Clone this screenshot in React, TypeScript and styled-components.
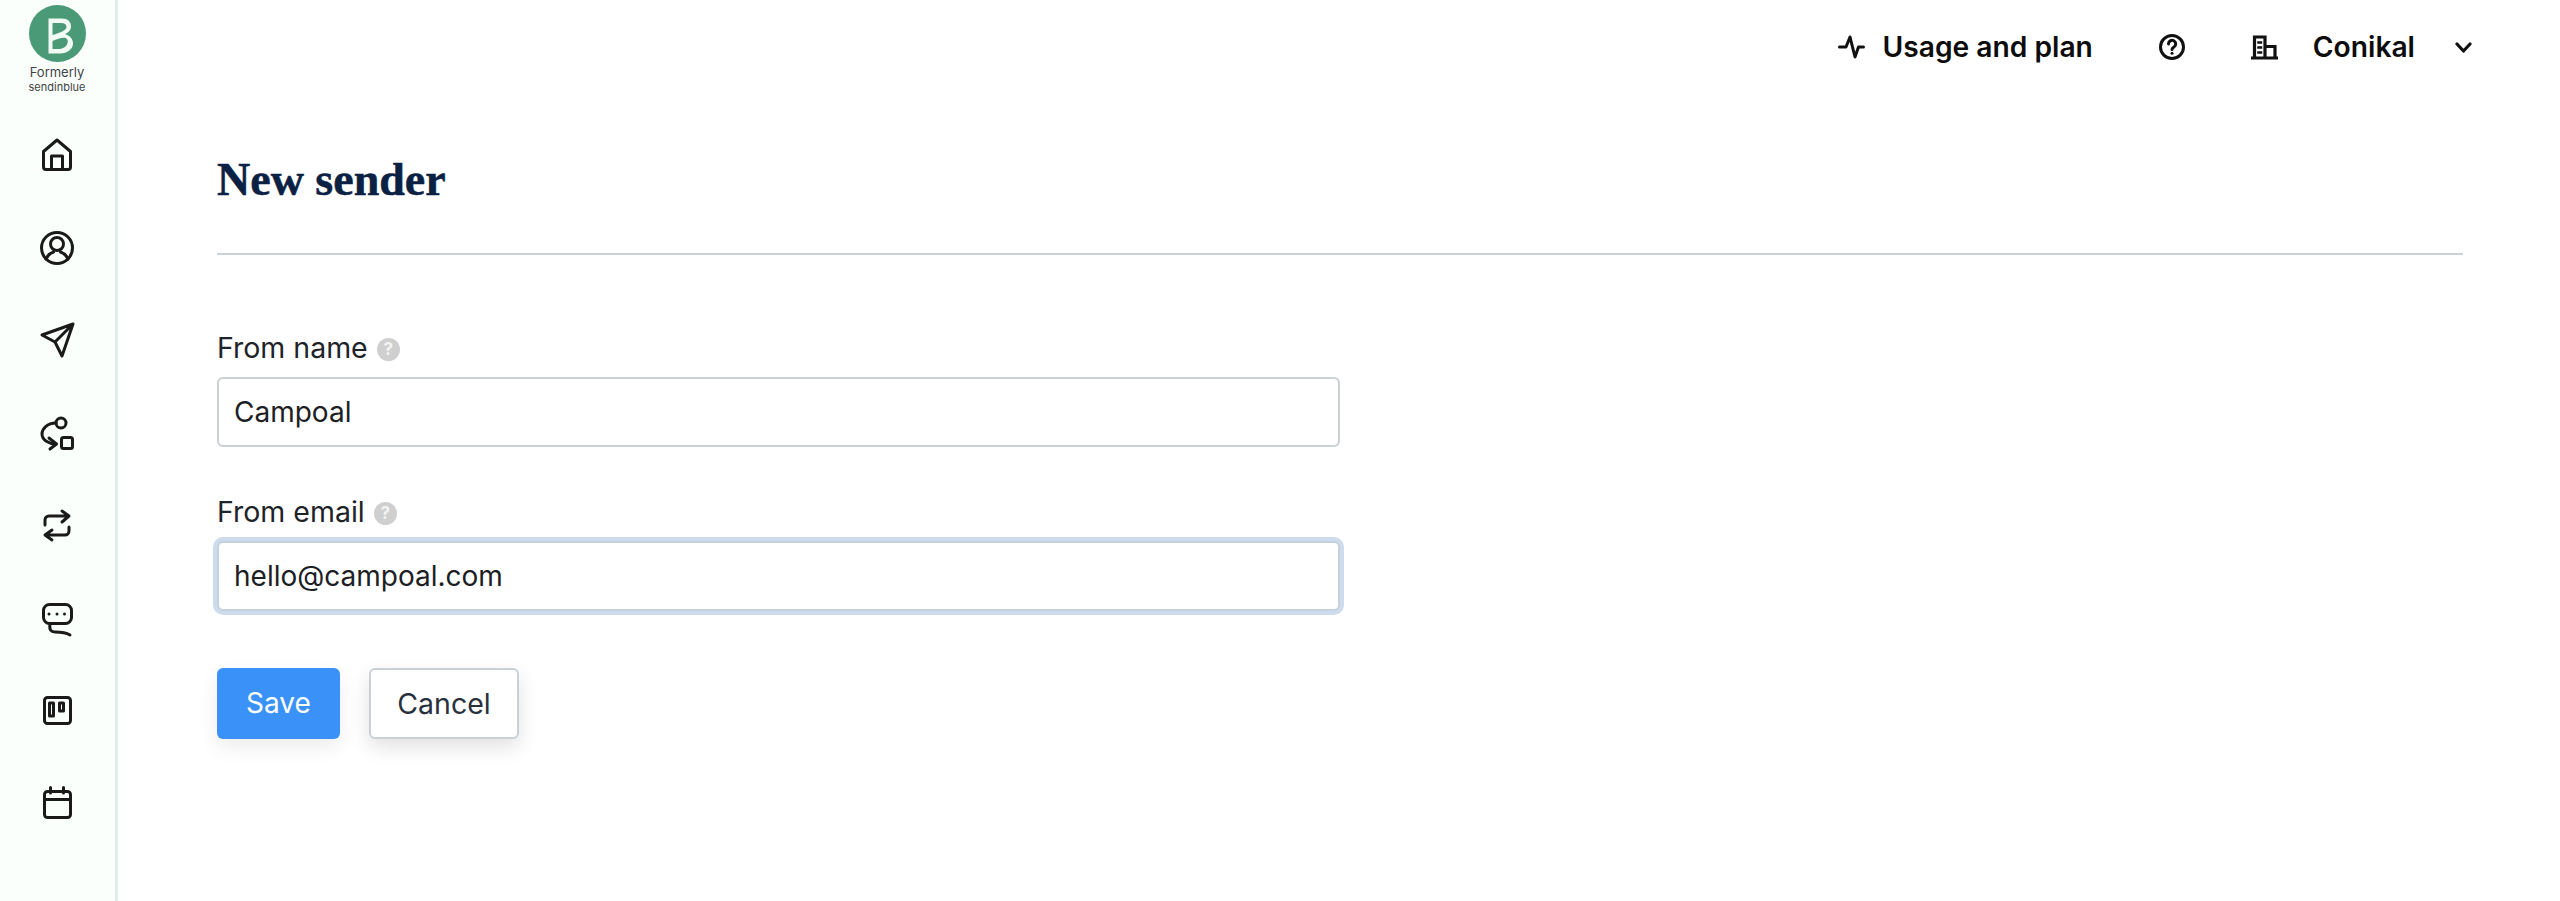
import React from 'react';
import styled, { createGlobalStyle } from 'styled-components';

const GlobalStyle = createGlobalStyle`
  html, body {
    margin: 0;
    padding: 0;
    height: 100%;
    background: #ffffff;
    font-family: 'Inter', 'Liberation Sans', sans-serif;
  }
`;

const Line: React.FC<{ size?: number; width?: number; children: React.ReactNode }> = ({ size = 40, width = 3, children }) => (
  <svg
    width={size}
    height={size}
    viewBox={`0 0 ${size} ${size}`}
    fill="none"
    stroke="#1a1a1a"
    strokeWidth={width}
    strokeLinecap="round"
    strokeLinejoin="round"
  >
    {children}
  </svg>
);

const navIcons = [
  <>
    <path d="M20 5 L6.5 16.5 V32 a2.5 2.5 0 0 0 2.5 2.5 H31 a2.5 2.5 0 0 0 2.5-2.5 V16.5 Z" />
    <path d="M14.5 34 V21 H25.5 V34" />
  </>,
  <>
    <circle cx="20" cy="20" r="15.5" />
    <circle cx="20" cy="16" r="6.5" />
    <path d="M9 31 Q11 26 16.5 24 M31 31 Q29 26 23.5 24" />
  </>,
  <path d="M36 4 L5 15 L18 22 L25 36 Z M36 4 L18 22" />,
  <>
    <circle cx="24" cy="10" r="5" />
    <rect x="24.5" y="24.5" width="11" height="11" rx="2" />
    <path d="M19 10 C10 10 5 16 5 21 C5 27 12 31 19 31 M12 25 L19.5 31 L13 36" />
  </>,
  <>
    <path d="M8 20 V15 a4 4 0 0 1 4-4 H32 M25 6 L32 11 L25 17" />
    <path d="M32 22 V26 a4 4 0 0 1 -4 4 H8 M15 25 L8 30 L15 35" />
  </>,
  <>
    <rect x="6.5" y="6.5" width="28" height="19" rx="6" />
    <path d="M13 26 C12 32 14 34 18 34 C24 34 28 34 33 37" />
    <path d="M12 16 h.01 M20 16 h.01 M27.5 16 h.01" />
  </>,
  <>
    <rect x="7.5" y="7.5" width="26" height="26" rx="3" />
    <rect x="12.5" y="13" width="4" height="13" />
    <rect x="22.5" y="13" width="4" height="8" />
  </>,
  <>
    <rect x="7.5" y="8.5" width="26" height="26" rx="3" />
    <path d="M7.5 16.5 H33.5 M13.5 4.5 V10 M26.5 4.5 V10" />
  </>,
];

const Help: React.FC = () => <HelpDot>?</HelpDot>;

const App: React.FC = () => {
  return (
    <Page>
      <GlobalStyle />
      <Sidebar>
        <Logo>
          <svg width="57" height="57" viewBox="0 0 57 57">
            <circle cx="28.5" cy="28.5" r="28.5" fill="#4a9a77" />
            <path
              d="M19.5 13.5 H33 C39 13.5 42 17 42 21.5 C42 25 39.5 27.5 36 29 C40.5 30.5 44 33.5 44 38.5 C44 44 38.5 48.5 31 48.5 H19.5 Z"
              fill="#f2faf5"
            />
            <path d="M23.5 18 H32 C35.5 18 37.5 19.5 37.5 22 C37.5 25 33 27 23.5 30 Z" fill="#4a9a77" />
            <path d="M23.5 36 C30 33 36 31.5 38 34 C40.5 37 37 44 30 44 H23.5 Z" fill="#4a9a77" />
          </svg>
          <LogoTop>Formerly</LogoTop>
          <LogoBottom>sendinblue</LogoBottom>
        </Logo>
        <Nav>
          {navIcons.map((icon, i) => (
            <Line key={i}>{icon}</Line>
          ))}
        </Nav>
      </Sidebar>
      <Main>
        <TopBar>
          <TopItem>
            <svg width="27" height="24" viewBox="0 0 27 24" fill="none" stroke="#111" strokeWidth="3" strokeLinecap="round" strokeLinejoin="round">
              <path d="M1.5 12 H8 L12 2 L17 22 L20.5 12 H25.5" />
            </svg>
            <TopLabel>Usage and plan</TopLabel>
          </TopItem>
          <HelpItem>
            <svg width="28" height="28" viewBox="0 0 28 28" fill="none" stroke="#111" strokeWidth="3" strokeLinecap="round" strokeLinejoin="round">
              <circle cx="14" cy="14" r="11.5" />
              <path d="M10.5 11 a3.6 3.6 0 1 1 5.5 3 c-1.3.8-2 1.3-2 2.5" />
              <path d="M14 20.2 h.01" />
            </svg>
          </HelpItem>
          <AccountIcon>
            <svg width="27" height="25" viewBox="0 0 27 25" fill="none" stroke="#111" strokeWidth="3.2" strokeLinecap="square">
              <path d="M3.5 22 V2 H14 V22 M14 11.5 H24 V22 M1.5 23 H25.5" />
              <path d="M7.5 7.5 H10 M7.5 12.5 H10 M7.5 17.5 H10" strokeWidth="2.5" />
            </svg>
          </AccountIcon>
          <Account>Conikal</Account>
          <svg width="17" height="11" viewBox="0 0 17 11" fill="none" stroke="#111" strokeWidth="3.2" strokeLinecap="round" strokeLinejoin="round">
            <path d="M2 2 L8.5 9 L15 2" />
          </svg>
        </TopBar>
        <Title>New sender</Title>
        <Divider />
        <Field>
          <Label>
            From name <Help />
          </Label>
          <Input value="Campoal" readOnly />
        </Field>
        <Field $second>
          <Label>
            From email <Help />
          </Label>
          <Input $focused value="hello@campoal.com" readOnly />
        </Field>
        <Actions>
          <SaveButton>Save</SaveButton>
          <CancelButton>Cancel</CancelButton>
        </Actions>
      </Main>
    </Page>
  );
};

const Page = styled.div`
  display: flex;
  min-height: 100vh;
  overflow: hidden;
`;

const Sidebar = styled.aside`
  flex: 0 0 118px;
  box-sizing: border-box;
  border-right: 3px solid #dfeee9;
  background: #fbfffc;
  padding: 5px 1px 0 0;
  display: flex;
  flex-direction: column;
  align-items: center;
`;

const Logo = styled.div`
  display: flex;
  flex-direction: column;
  align-items: center;
  color: #3f4347;
  font-family: 'Inter', sans-serif;
  svg {
    display: block;
  }
`;

const LogoTop = styled.div`
  font-size: 13px;
  line-height: 16px;
  margin-top: 2px;
`;

const LogoBottom = styled.div`
  font-size: 11px;
  line-height: 15px;
`;

const Nav = styled.nav`
  margin-top: 40px;
  display: flex;
  flex-direction: column;
  gap: 52.5px;
  svg {
    display: block;
  }
`;

const Main = styled.main`
  flex: 1;
  padding: 0 97px 0 99px;
`;

const TopBar = styled.header`
  height: 94px;
  margin-right: -9px;
  display: flex;
  align-items: center;
  justify-content: flex-end;
`;

const TopItem = styled.div`
  display: flex;
  align-items: center;
  gap: 17px;
`;

const TopLabel = styled.span`
  font-size: 28.2px;
  font-weight: 600;
  color: #0c0c0c;
`;

const HelpItem = styled.div`
  display: flex;
  margin-left: 65px;
`;

const AccountIcon = styled.div`
  display: flex;
  margin-left: 65px;
`;

const Account = styled(TopLabel)`
  margin-left: 35px;
  margin-right: 40px;
`;

const Title = styled.h1`
  margin: 59px 0 0;
  font-family: 'Liberation Serif', serif;
  font-size: 46px;
  line-height: 54px;
  font-weight: 700;
  color: #0b2144;
  -webkit-text-stroke: 0.5px #0b2144;
`;

const Divider = styled.hr`
  margin: 46px 0 0;
  border: 0;
  height: 2px;
  background: #ccd2d9;
`;

const Field = styled.div<{ $second?: boolean }>`
  margin-top: ${(p) => (p.$second ? '40.5px' : '69px')};
  width: 1123px;
`;

const Label = styled.label`
  display: flex;
  align-items: center;
  gap: 9px;
  height: 48px;
  font-size: 28.5px;
  line-height: 48px;
  color: #1e2329;
`;

const HelpDot = styled.span`
  width: 23px;
  height: 23px;
  margin-top: 3px;
  border-radius: 50%;
  background: #cfcfcf;
  color: #f4f4f4;
  font-size: 17px;
  font-weight: 700;
  line-height: 23px;
  text-align: center;
`;

const Input = styled.input<{ $focused?: boolean }>`
  display: block;
  box-sizing: border-box;
  width: 100%;
  height: 70px;
  margin: 5px 0 0;
  padding: 0 15px;
  border: 2px solid ${(p) => (p.$focused ? '#c4d2de' : '#c9d0d6')};
  border-radius: 6px;
  outline: none;
  background: #fff;
  box-shadow: ${(p) => (p.$focused ? '0 0 0 4px #cddcec' : 'none')};
  font-family: inherit;
  font-size: 28px;
  color: #1c2024;
`;

const Actions = styled.div`
  display: flex;
  gap: 29px;
  margin-top: 57px;
`;

const SaveButton = styled.button`
  box-sizing: border-box;
  width: 123px;
  height: 71px;
  border: 0;
  border-radius: 6px;
  background: #3a92f8;
  box-shadow: 0 8px 20px rgba(0, 0, 0, 0.08);
  color: #fff;
  font-family: inherit;
  font-size: 28px;
`;

const CancelButton = styled.button`
  box-sizing: border-box;
  width: 150px;
  height: 71px;
  border: 2px solid #c9d0d6;
  border-radius: 6px;
  background: #fff;
  box-shadow: 0 8px 20px rgba(0, 0, 0, 0.12);
  color: #27303b;
  font-family: inherit;
  font-size: 28.5px;
`;

export default App;
